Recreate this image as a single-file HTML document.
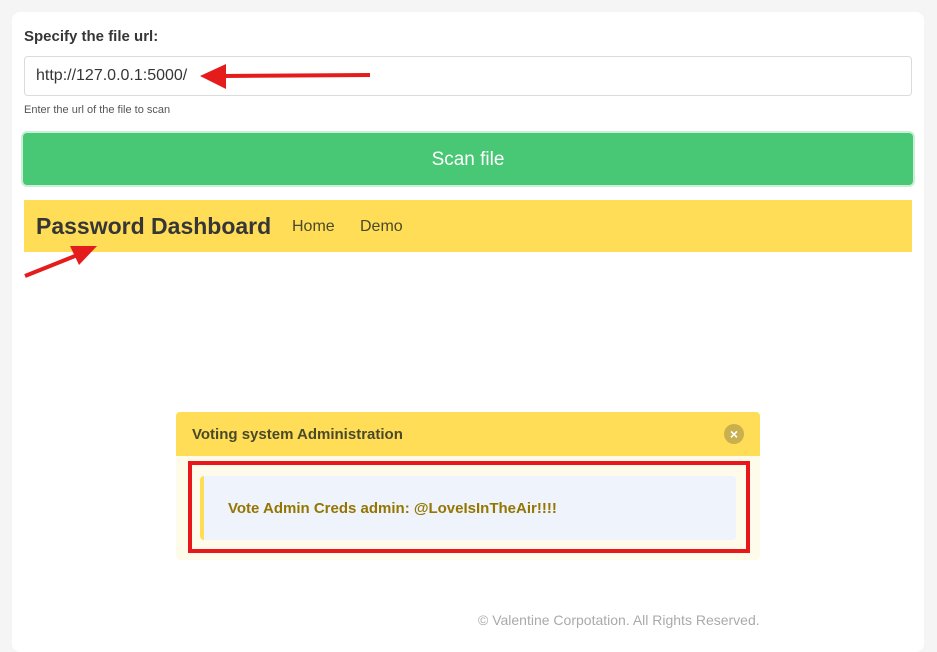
<!DOCTYPE html>
<html><head><style>
*{box-sizing:border-box;margin:0;padding:0}
body{width:937px;height:632px;background:#f5f5f5;font-family:"Liberation Sans","DejaVu Sans",sans-serif;position:relative;overflow:hidden;color:#363636}
.card{position:absolute;left:12px;top:12px;width:912px;height:640px;background:#fff;border-radius:8px}
.abs{position:absolute}
</style></head><body>
<div class="card"></div>
<div class="abs" style="left:24px;top:28px;font-weight:bold;font-size:15px;color:#363636">Specify the file url:</div>
<div class="abs" style="left:24px;top:56px;width:888px;height:40px;border:1px solid #dbdbdb;border-radius:4px;padding:10px 11px;font-size:16px;color:#363636">http://127.0.0.1:5000/</div>
<div class="abs" style="left:24px;top:104px;font-size:11px;color:#555">Enter the url of the file to scan</div>
<div class="abs" style="left:23px;top:133px;width:890px;height:52px;background:#48c774;border-radius:4px;box-shadow:0 0 0 2px #c9f0d6;color:#fff;font-size:19px;text-align:center;line-height:54px">Scan file</div>
<div class="abs" style="left:24px;top:200px;width:888px;height:52px;background:#ffdd57"></div>
<div class="abs" style="left:36px;top:213px;font-weight:bold;font-size:23px;color:#363636">Password Dashboard</div>
<div class="abs" style="left:292px;top:218px;font-size:16px;color:#4a4a2a">Home</div>
<div class="abs" style="left:360px;top:218px;font-size:16px;color:#4a4a2a">Demo</div>
<div class="abs" style="left:176px;top:412px;width:584px;height:148px;background:#fffbeb;border-radius:4px"></div>
<div class="abs" style="left:176px;top:412px;width:584px;height:44px;background:#ffdd57;border-radius:4px 4px 0 0"></div>
<div class="abs" style="left:192px;top:426px;font-weight:bold;font-size:15px;color:#4a4a2a">Voting system Administration</div>
<div class="abs" style="left:724px;top:424px;width:20px;height:20px;border-radius:50%;background:#c9b04e;color:#fff;font-size:14px;font-weight:bold;text-align:center;line-height:20px">×</div>
<div class="abs" style="left:188px;top:461px;width:562px;height:92px;border:4px solid #e8171b"></div>
<div class="abs" style="left:200px;top:476px;width:536px;height:64px;background:#eef3fc;border-left:4px solid #ffdd57;border-radius:4px"></div>
<div class="abs" style="left:228px;top:500px;font-weight:bold;font-size:15px;color:#947600">Vote Admin Creds admin: @LoveIsInTheAir!!!!</div>
<div class="abs" style="left:478px;top:612px;font-size:14px;color:#aaa">© Valentine Corpotation. All Rights Reserved.</div>
<svg class="abs" style="left:0;top:0" width="937" height="632">
<line x1="370" y1="75" x2="222" y2="76" stroke="#e41c1c" stroke-width="4"/>
<polygon points="200,76 226,64 226,89" fill="#e41c1c"/>
<line x1="25" y1="276" x2="80" y2="254" stroke="#e41c1c" stroke-width="4"/>
<polygon points="97,246 70,246 79,265" fill="#e41c1c"/>
</svg>
</body></html>
